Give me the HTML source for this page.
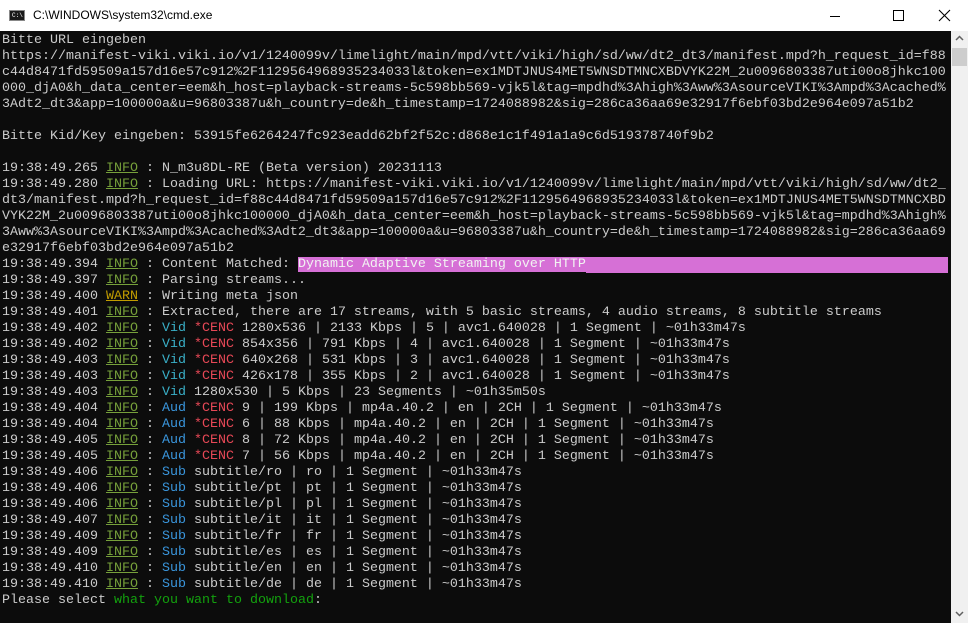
<!DOCTYPE html>
<html><head><meta charset="utf-8"><style>
*{margin:0;padding:0;box-sizing:border-box}
body{width:968px;height:623px;overflow:hidden;background:#fff;font-family:"Liberation Sans",sans-serif;position:relative}
.title{height:31px;background:#fff;position:relative;border-bottom:0}
.title .t{position:absolute;left:33px;top:8px;font-size:12px;color:#000}
.ico{position:absolute;left:9px;top:10px;width:16px;height:11px;background:#1a1a1a;border:1px solid #888}
.ico span{position:absolute;left:2px;top:1px;font-size:6px;color:#fff;font-family:"Liberation Mono",monospace}
.con{position:absolute;left:0;top:31px;width:951px;height:592px;background:#0c0c0c;overflow:hidden}
pre{font-family:"Liberation Mono",monospace;font-size:13.33px;line-height:16px;color:#cccccc;padding-left:2px;padding-top:2px;white-space:pre}
.i{color:#76a03a;text-decoration:underline}
.w{color:#c19c00;text-decoration:underline}
.v{color:#3ab0c8}
.a{color:#3a96dd}
.c{color:#e74856}
.m{background:#d670d6;color:#f2f2f2}
.bar{background:#d670d6;display:inline-block;width:362px;height:16px;vertical-align:top}
.g{color:#13a10e}
.sb{position:absolute;left:951px;top:31px;width:17px;height:592px;background:#f0f0f0}
.thumb{position:absolute;left:1px;top:17px;width:15px;height:18px;background:#cdcdcd}
</style></head><body>
<div class="title"><div class="ico"><span>C:\</span></div><div class="t">C:\WINDOWS\system32\cmd.exe</div>
<svg style="position:absolute;left:830px;top:8px" width="130" height="16"><line x1="0" y1="8.5" x2="10" y2="8.5" stroke="#000"/><rect x="63.5" y="2.5" width="10" height="10" fill="none" stroke="#000"/><path d="M109 2 L120 13 M120 2 L109 13" stroke="#000" stroke-width="1.1"/></svg>
</div>
<div class="con"><pre>Bitte URL eingeben
https://manifest-viki.viki.io/v1/1240099v/limelight/main/mpd/vtt/viki/high/sd/ww/dt2_dt3/manifest.mpd?h_request_id=f88
c44d8471fd59509a157d16e57c912%2F1129564968935234033l&amp;token=ex1MDTJNUS4MET5WNSDTMNCXBDVYK22M_2u0096803387uti00o8jhkc100
000_djA0&amp;h_data_center=eem&amp;h_host=playback-streams-5c598bb569-vjk5l&amp;tag=mpdhd%3Ahigh%3Aww%3AsourceVIKI%3Ampd%3Acached%
3Adt2_dt3&amp;app=100000a&amp;u=96803387u&amp;h_country=de&amp;h_timestamp=1724088982&amp;sig=286ca36aa69e32917f6ebf03bd2e964e097a51b2

Bitte Kid/Key eingeben: 53915fe6264247fc923eadd62bf2f52c:d868e1c1f491a1a9c6d519378740f9b2

19:38:49.265 <span class="i">INFO</span> : N_m3u8DL-RE (Beta version) 20231113
19:38:49.280 <span class="i">INFO</span> : Loading URL: https://manifest-viki.viki.io/v1/1240099v/limelight/main/mpd/vtt/viki/high/sd/ww/dt2_
dt3/manifest.mpd?h_request_id=f88c44d8471fd59509a157d16e57c912%2F1129564968935234033l&amp;token=ex1MDTJNUS4MET5WNSDTMNCXBD
VYK22M_2u0096803387uti00o8jhkc100000_djA0&amp;h_data_center=eem&amp;h_host=playback-streams-5c598bb569-vjk5l&amp;tag=mpdhd%3Ahigh%
3Aww%3AsourceVIKI%3Ampd%3Acached%3Adt2_dt3&amp;app=100000a&amp;u=96803387u&amp;h_country=de&amp;h_timestamp=1724088982&amp;sig=286ca36aa69
e32917f6ebf03bd2e964e097a51b2
19:38:49.394 <span class="i">INFO</span> : Content Matched: <span class="m">Dynamic Adaptive Streaming over HTTP</span><span class="bar"></span>
19:38:49.397 <span class="i">INFO</span> : Parsing streams...
19:38:49.400 <span class="w">WARN</span> : Writing meta json
19:38:49.401 <span class="i">INFO</span> : Extracted, there are 17 streams, with 5 basic streams, 4 audio streams, 8 subtitle streams
19:38:49.402 <span class="i">INFO</span> : <span class="v">Vid</span> <span class="c">*CENC</span> 1280x536 | 2133 Kbps | 5 | avc1.640028 | 1 Segment | ~01h33m47s
19:38:49.402 <span class="i">INFO</span> : <span class="v">Vid</span> <span class="c">*CENC</span> 854x356 | 791 Kbps | 4 | avc1.640028 | 1 Segment | ~01h33m47s
19:38:49.403 <span class="i">INFO</span> : <span class="v">Vid</span> <span class="c">*CENC</span> 640x268 | 531 Kbps | 3 | avc1.640028 | 1 Segment | ~01h33m47s
19:38:49.403 <span class="i">INFO</span> : <span class="v">Vid</span> <span class="c">*CENC</span> 426x178 | 355 Kbps | 2 | avc1.640028 | 1 Segment | ~01h33m47s
19:38:49.403 <span class="i">INFO</span> : <span class="v">Vid</span> 1280x530 | 5 Kbps | 23 Segments | ~01h35m50s
19:38:49.404 <span class="i">INFO</span> : <span class="a">Aud</span> <span class="c">*CENC</span> 9 | 199 Kbps | mp4a.40.2 | en | 2CH | 1 Segment | ~01h33m47s
19:38:49.404 <span class="i">INFO</span> : <span class="a">Aud</span> <span class="c">*CENC</span> 6 | 88 Kbps | mp4a.40.2 | en | 2CH | 1 Segment | ~01h33m47s
19:38:49.405 <span class="i">INFO</span> : <span class="a">Aud</span> <span class="c">*CENC</span> 8 | 72 Kbps | mp4a.40.2 | en | 2CH | 1 Segment | ~01h33m47s
19:38:49.405 <span class="i">INFO</span> : <span class="a">Aud</span> <span class="c">*CENC</span> 7 | 56 Kbps | mp4a.40.2 | en | 2CH | 1 Segment | ~01h33m47s
19:38:49.406 <span class="i">INFO</span> : <span class="a">Sub</span> subtitle/ro | ro | 1 Segment | ~01h33m47s
19:38:49.406 <span class="i">INFO</span> : <span class="a">Sub</span> subtitle/pt | pt | 1 Segment | ~01h33m47s
19:38:49.406 <span class="i">INFO</span> : <span class="a">Sub</span> subtitle/pl | pl | 1 Segment | ~01h33m47s
19:38:49.407 <span class="i">INFO</span> : <span class="a">Sub</span> subtitle/it | it | 1 Segment | ~01h33m47s
19:38:49.409 <span class="i">INFO</span> : <span class="a">Sub</span> subtitle/fr | fr | 1 Segment | ~01h33m47s
19:38:49.409 <span class="i">INFO</span> : <span class="a">Sub</span> subtitle/es | es | 1 Segment | ~01h33m47s
19:38:49.410 <span class="i">INFO</span> : <span class="a">Sub</span> subtitle/en | en | 1 Segment | ~01h33m47s
19:38:49.410 <span class="i">INFO</span> : <span class="a">Sub</span> subtitle/de | de | 1 Segment | ~01h33m47s
Please select <span class="g">what you want to download</span>:
</pre></div>
<div class="sb"><div class="thumb"></div>
<svg style="position:absolute;left:4px;top:4px" width="9" height="6"><path d="M1 5 L4.5 1.5 L8 5" stroke="#606060" stroke-width="1.5" fill="none"/></svg>
<svg style="position:absolute;left:4px;top:580px" width="9" height="6"><path d="M1 1 L4.5 4.5 L8 1" stroke="#606060" stroke-width="1.5" fill="none"/></svg>
</div>
</body></html>
